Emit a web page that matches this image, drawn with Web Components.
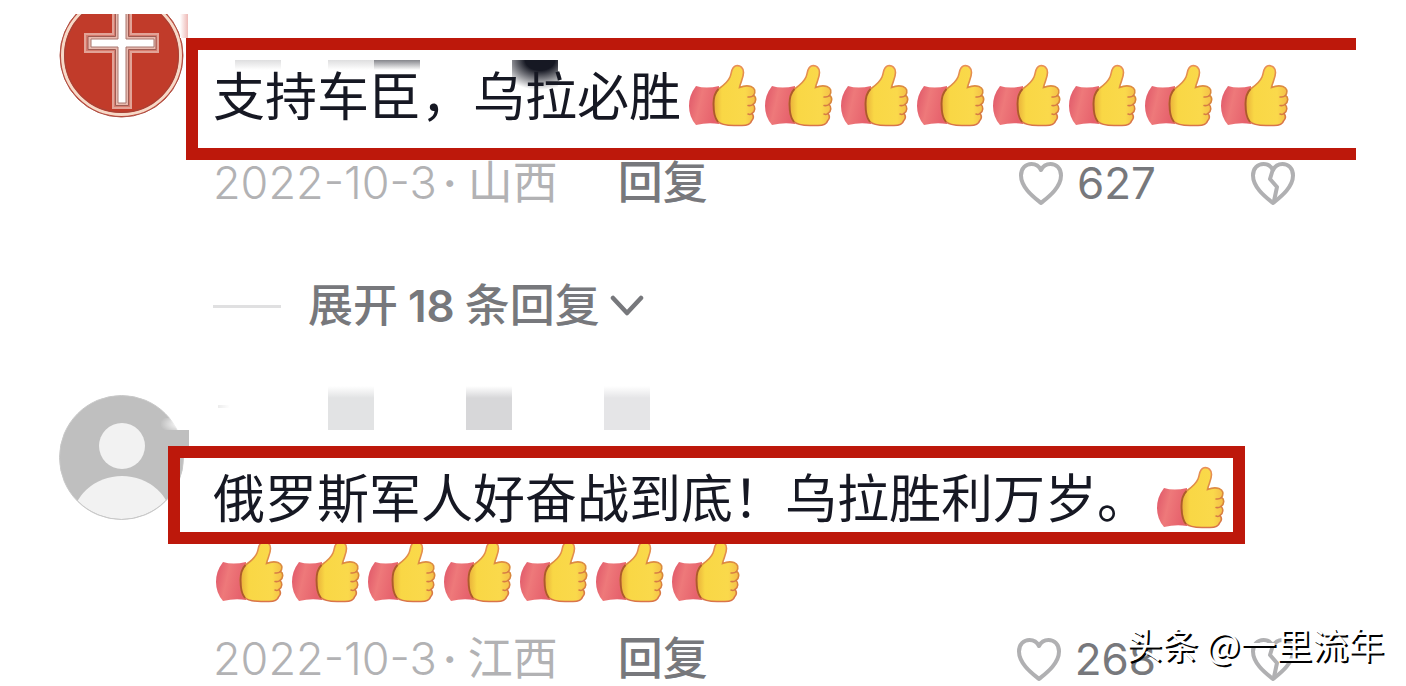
<!DOCTYPE html>
<html lang="zh-CN">
<head>
<meta charset="utf-8">
<meta name="viewport" content="width=device-width, initial-scale=1">
<title>评论</title>
<style>
  body { margin: 0; background: #fff; font-family: Inter, "Noto Sans CJK SC", sans-serif; color: #161823; }
</style>
</head>
<body>
<comment-thread>
  <comment-item avatar="cross" frame="open" likes="627" date="2022-10-3" place="山西" thumbs="8">支持车臣，乌拉必胜</comment-item>
  <expand-replies count="18"></expand-replies>
  <comment-item avatar="person" frame="closed" likes="268" date="2022-10-3" place="江西" thumbs="8">俄罗斯军人好奋战到底！乌拉胜利万岁。</comment-item>
  <water-mark slot="mark">头条 @一里流年</water-mark>
</comment-thread>

<script>
function define(name, template) {
  customElements.define(name, class extends HTMLElement {
    connectedCallback() {
      if (this.shadowRoot) return;
      this.attachShadow({ mode: 'open' }).innerHTML = typeof template === 'function' ? template(this) : template;
    }
  });
}

define('comment-thread', `
<style>
  :host { display: block; position: relative; padding-top: 14px; }
  main { overflow: hidden; }
  .list { display: flex; flex-direction: column; margin-top: -30px; }
</style>
<main><div class="list"><slot></slot></div></main><slot name="mark"></slot>`);

define('thumb-up', `
<style>
  :host { display: inline-block; width: 76px; height: 74px; vertical-align: top; }
  svg { display: block; margin-top: 3px; }
</style>
<svg width="76" height="74" viewBox="0 0 76 74" role="img" aria-label="赞">
  <defs>
    <linearGradient id="c" x1="0" x2="1" y1="0" y2="0.3">
      <stop offset="0" stop-color="#df5568"/><stop offset=".45" stop-color="#ee797a"/><stop offset="1" stop-color="#e6616c"/>
    </linearGradient>
    <linearGradient id="s" x1="0" x2="0" y1="0" y2="1">
      <stop offset="0" stop-color="#e98f58"/><stop offset=".5" stop-color="#d88a3a"/><stop offset="1" stop-color="#d9744a"/>
    </linearGradient>
    <linearGradient id="h" x1="0" x2="1" y1="0" y2="0">
      <stop offset="0" stop-color="#e9b03a"/><stop offset=".2" stop-color="#f9d745"/><stop offset=".75" stop-color="#fad94b"/><stop offset="1" stop-color="#f4bd48"/>
    </linearGradient>
  </defs>
  <path d="M10 26Q20 29 33 26V64Q22 62 10 65Q3 57 3 46Q3 35 10 26Z" fill="url(#c)"/>
  <path d="M50 5.800C54.500 5 57.500 8 57.500 12.500C57.500 18 54.500 22 53.500 27.500C57 26 62 25.500 65 26.500C69 28 70 31.500 67.500 35.500C70.500 37 70.500 42 67 44.500C69.500 46.500 69.500 51.500 66 53.500C68 56 67.500 59 65.500 61C64.500 64.500 60 65.500 56 65.500H48C40 65.500 34 64 31 61C28 57 27.500 50 27.500 43C27.500 37 29 32 32.500 29C37.500 25.500 42 22 44 17C46 12.500 45 7 50 5.800Z" fill="url(#h)" stroke="url(#s)" stroke-width="1.600"/>
  <path d="M67.500 35.500Q65.500 37.500 62 37M67 44.500Q65 46 62 45.500M66 53.500Q64.500 55 62 54" fill="none" stroke="#d67b45" stroke-width="1.500" stroke-linecap="round"/>
  <path d="M32.500 29C28.500 33 27.500 38 27.500 44C27.500 52 28.500 58 32 62" fill="none" stroke="#ad5a2c" stroke-width="1.800"/>
</svg>`);

const avatars = {
  cross: `
<circle cx="62.500" cy="62.500" r="61.500" fill="#c13b2a" stroke="#ad5146" stroke-width="1"/>
<circle cx="62.500" cy="62.500" r="59" fill="none" stroke="#f6d9c8" stroke-width="3"/>
<circle cx="62.500" cy="62.500" r="57" fill="none" stroke="#a44338" stroke-width="1"/>
<path d="M54 10H72V41H99V59H72V115H54V59H26V41H54Z" fill="#d57b6d" stroke="#e2a397" stroke-width="2"/>
<path d="M56.500 10H69.500V43.500H97V56.500H69.500V112.500H56.500V56.500H29V43.500H56.500Z" fill="#e9b9ae" stroke="#9c5b53" stroke-width="1"/>
<path d="M59 10H67V46H95V54H67V110H59V54H32V46H59Z" fill="#fff" stroke="#a8766f" stroke-width="1"/>`,
  person: `
<defs><clipPath id="k"><circle cx="62.500" cy="62.500" r="61.500"/></clipPath></defs>
<circle cx="62.500" cy="62.500" r="62" fill="#bfbfbf"/>
<circle cx="63" cy="51" r="23" fill="#f2f2f2"/>
<ellipse cx="63" cy="127" rx="50" ry="46" fill="#f2f2f2" clip-path="url(#k)"/>
<circle cx="62.500" cy="62.500" r="62" fill="none" stroke="#c8c8c8"/>`
};

define('user-avatar', el => `
<style>
  :host { display: block; width: 125px; height: 125px; }
  svg { display: block; }
</style>
<svg width="125" height="125" viewBox="0 0 125 125" role="img" aria-label="头像">${avatars[el.getAttribute('kind')]}</svg>`);

/* Red outline drawn over a comment; "open" runs to the edge of the thread. */
define('red-frame', `
<style>
  :host { display: block; position: absolute; box-sizing: border-box; border: 12px solid #bd180b; pointer-events: none; }
  :host([kind=open]) { left: 186px; right: 50px; top: 54px; height: 122px; border-right: 0; }
  :host([kind=closed]) { left: 168px; width: 1077px; top: 60px; height: 98px; }
</style>`);

/* Leftover tiles of the pixelated user name. */
define('name-mosaic', el => `
<style>
  :host { display: block; position: relative; height: 44px; }
  .row { display: flex; gap: 92px; height: 44px; padding-left: 115px; }
  .row i { width: 46px; background: linear-gradient(#fff, var(--c) 12px); }
  .bit { position: absolute; }
</style>
${el.getAttribute('kind') === 'cross' ? `
  <i class="bit" style="left:-33px;top:30px;width:8px;height:24px;background:linear-gradient(90deg,#fff,#eeb9b6)"></i>
  <i class="bit" style="left:22px;top:76px;width:46px;height:10px;background:linear-gradient(#dededf,#fff)"></i>
  <i class="bit" style="left:115px;top:76px;width:46px;height:10px;background:linear-gradient(#dededf,#fff)"></i>
  <i class="bit" style="left:161px;top:76px;width:46px;height:10px;background:linear-gradient(#85868c,#fff)"></i>
  <i class="bit" style="left:299px;top:76px;width:46px;height:32px;background:radial-gradient(ellipse 42px 30px at 28px 0,#161823 35%,rgba(22,24,35,0))"></i>`
: `
  <div class="row"><i style="--c:#e2e3e4"></i><i style="--c:#d7d7d9"></i><i style="--c:#e5e5e7"></i></div>
  <i class="bit" style="left:5px;top:19px;width:12px;height:3px;background:linear-gradient(90deg,#ececec,#fff)"></i>
  <i class="bit" style="left:-52px;top:32px;width:26px;height:12px;background:radial-gradient(ellipse 20px 10px at 19px 6px,#fff,rgba(255,255,255,0))"></i>
  <i class="bit" style="left:-50px;top:44px;width:26px;height:18px;background:#bfbfbf"></i>`}`);

const heart = 'M23 42C17 37 3 27 3 14.500C3 7 8 3 13.500 3C17.500 3 21 5 23 9C25 5 28.500 3 32.500 3C38 3 43 7 43 14.500C43 27 29 37 23 42Z';

define('comment-meta', el => `
<style>
  :host { display: flex; align-items: center; height: 54px; font-size: 44px; line-height: 54px; color: #b2b2b4; white-space: nowrap; }
  .date { font-size: 45px; font-weight: 300; }
  .place { font-size: 45px; margin-left: 11px; }
  .dot { margin-left: 6px; font-weight: 600; }
  button { font: inherit; color: #77787c; background: none; border: 0; padding: 0; cursor: pointer; display: flex; align-items: center; }
  .reply { font-size: 45px; font-weight: 500; margin-left: 60px; }
  .like { margin-left: auto; gap: 13px; }
  .hate { margin-left: 94px; }
  svg { display: block; }
</style>
<time class="date">${el.getAttribute('date')}</time><span class="dot">·</span><span class="place">${el.getAttribute('place')}</span>
<button class="reply">回复</button>
<button class="like" aria-label="喜欢"><svg width="46" height="44" viewBox="0 0 46 44" fill="none" stroke="#b0b0b2" stroke-width="4" stroke-linejoin="round"><path d="${heart}"/></svg><span>${el.getAttribute('likes')}</span></button>
<button class="hate" aria-label="不喜欢"><svg width="46" height="44" viewBox="0 0 46 44" fill="none" stroke="#b0b0b2" stroke-width="4" stroke-linejoin="round"><path d="${heart}"/><path d="M23 8L20 18L27 26L24 40"/></svg></button>`);

define('comment-item', el => `
<style>
  :host { display: grid; grid-template-columns: 125px minmax(0, 1fr); column-gap: 29px; padding: 0 110px 0 59px; position: relative; }
  user-avatar { margin-top: 9px; }
  p { margin: 29px 0 25px; font-family: "Noto Sans CJK SC", sans-serif; font-size: 52px; line-height: 74px; }
  thumb-up:first-of-type { margin-left: 5px; }
</style>
<user-avatar kind="${el.getAttribute('avatar')}"></user-avatar>
<div>
  <name-mosaic kind="${el.getAttribute('avatar')}"></name-mosaic>
  <p><slot></slot>${'<thumb-up></thumb-up>'.repeat(+el.getAttribute('thumbs'))}</p>
  <comment-meta date="${el.getAttribute('date')}" place="${el.getAttribute('place')}" likes="${el.getAttribute('likes')}"></comment-meta>
</div>
<red-frame kind="${el.getAttribute('frame')}"></red-frame>`);

define('expand-replies', el => `
<style>
  :host { display: flex; align-items: center; gap: 27px; height: 54px; margin: 69px 0 53px; padding-left: 213px; }
  hr { width: 68px; height: 3px; margin: 0; border: 0; background: #e0e0e1; }
  button { display: flex; align-items: center; gap: 10px; font: inherit; font-size: 45px; font-weight: 500; line-height: 54px; color: #77787c; background: none; border: 0; padding: 0; cursor: pointer; }
  b { font-size: 44px; font-weight: 600; }
  svg { display: block; }
</style>
<hr><button><span>展开</span><b>${el.getAttribute('count')}</b><span>条回复</span><svg width="34" height="22" viewBox="0 0 34 22" fill="none" stroke="#77787c" stroke-width="4.500" stroke-linecap="round" stroke-linejoin="round"><path d="M3 3L17 18L31 3"/></svg></button>`);

define('water-mark', `
<style>
  :host { display: block; position: absolute; right: 22px; bottom: 16px; font-family: "Noto Sans CJK SC", sans-serif; font-size: 36px; line-height: 54px; color: #fff; text-shadow: 2px 2px 0 #000; white-space: nowrap; }
</style><slot></slot>`);
</script>
</body>
</html>
